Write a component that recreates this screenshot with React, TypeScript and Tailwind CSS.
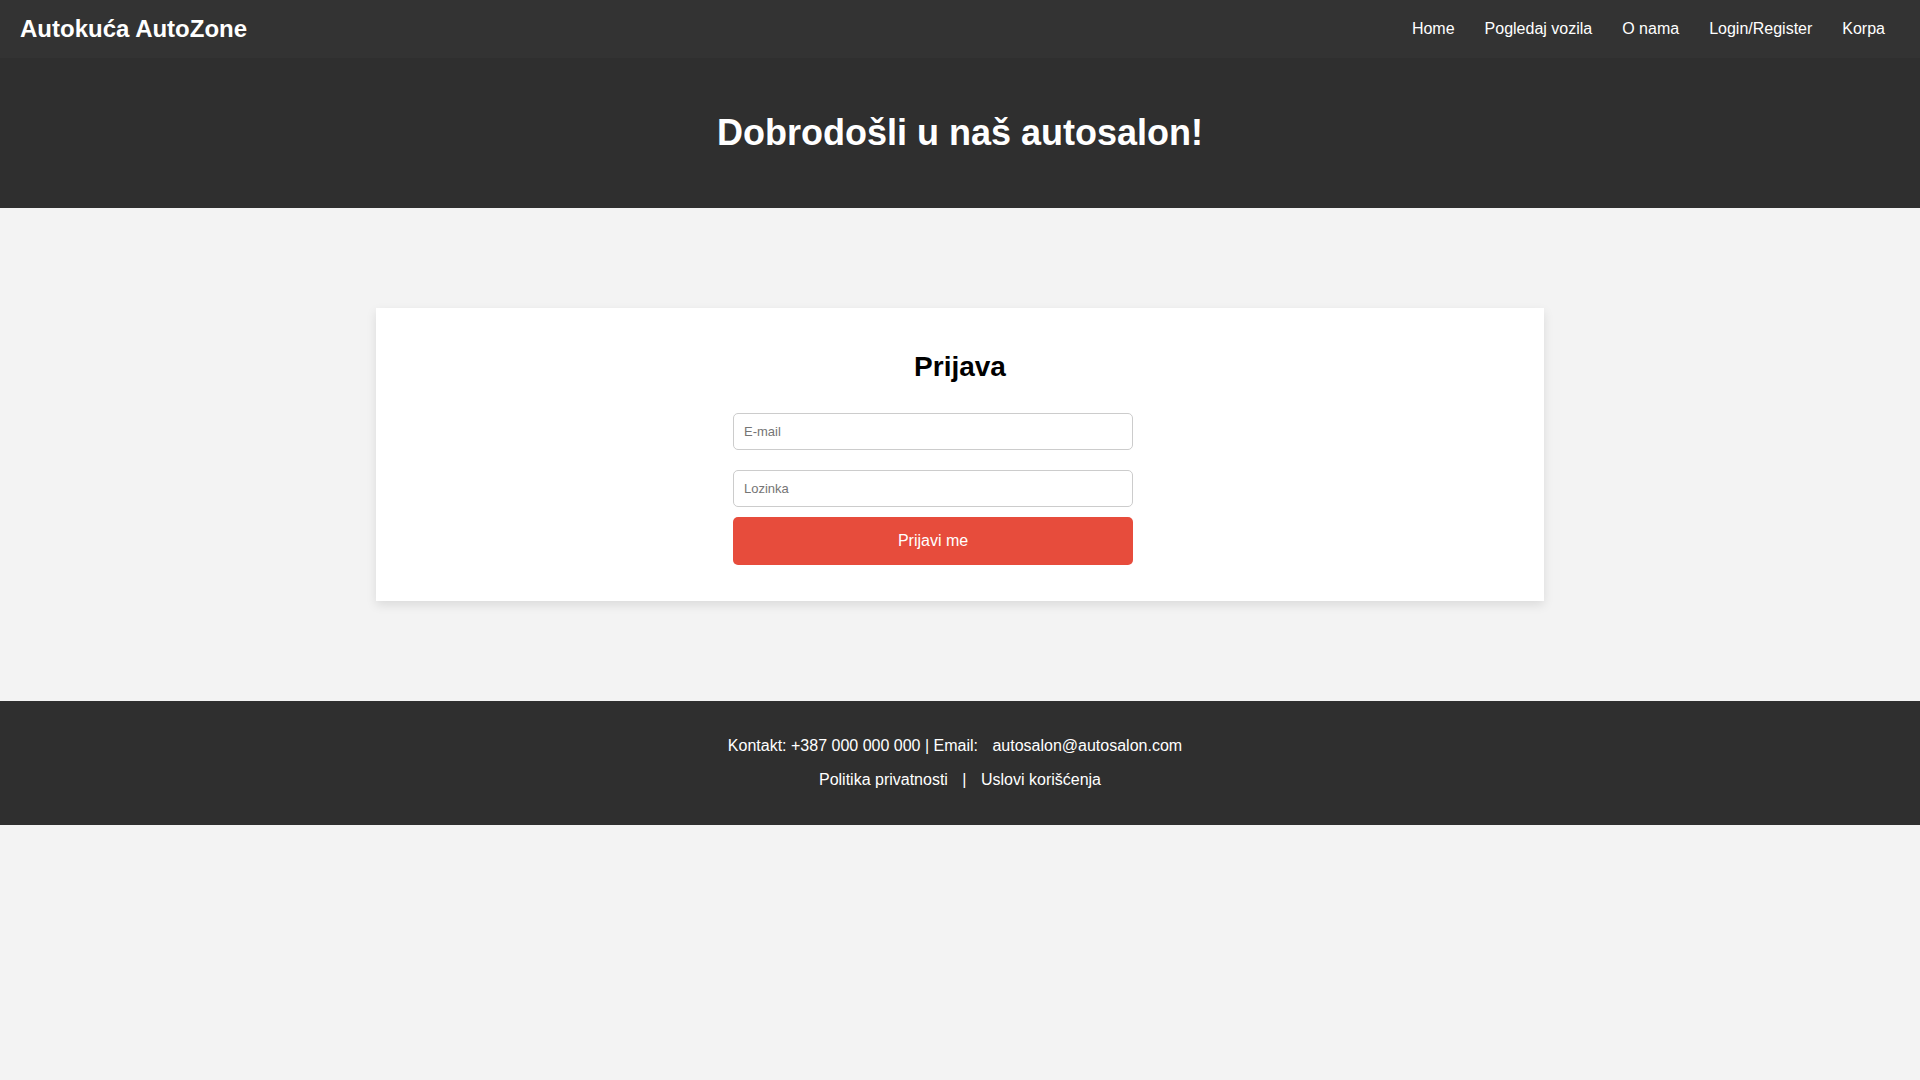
const navItems = ["Home", "Pogledaj vozila", "O nama", "Login/Register", "Korpa"];

export default function App() {
  return (
    <div className="min-h-screen bg-[#f3f3f3] font-['Liberation_Sans',Arial,sans-serif] text-base text-black">
      <nav className="flex items-center justify-between bg-[#333333] px-5 py-2.5 text-white">
        <div className="text-2xl leading-[38px] font-bold">Autokuća AutoZone</div>
        <ul className="flex">
          {navItems.map((item) => (
            <li key={item}>
              <a href="#" className="px-[15px]">{item}</a>
            </li>
          ))}
        </ul>
      </nav>

      <header className="bg-[#2f2f2f] px-5 py-[50px] text-center text-white">
        <h1 className="text-4xl leading-[50px] font-bold">Dobrodošli u naš autosalon!</h1>
      </header>

      <main className="px-5 py-[100px]">
        <section className="mx-auto max-w-[1168px] bg-white px-5 py-9 shadow-[0_4px_10px_rgba(0,0,0,0.1)]">
          <h2 className="mb-[23px] text-center text-[28px] leading-[46px] font-bold">Prijava</h2>
          <form className="mx-auto flex max-w-[454px] flex-col pr-[54px]" onSubmit={(e) => e.preventDefault()}>
            <input type="email" aria-label="E-mail" placeholder="E-mail" className="mb-5 h-[37px] w-full rounded-[5px] border border-[#cccccc] px-2.5 text-[13px] placeholder:text-[#757575]" />
            <input type="password" aria-label="Lozinka" placeholder="Lozinka" className="mb-2.5 h-[37px] w-full rounded-[5px] border border-[#cccccc] px-2.5 text-[13px] placeholder:text-[#757575]" />
            <button type="submit" className="h-12 w-full rounded-[5px] bg-[#e74c3c] text-white">Prijavi me</button>
          </form>
        </section>
      </main>

      <footer className="bg-[#2f2f2f] px-5 py-[33px] text-center text-white">
        <p className="mb-2.5">
          Kontakt: +387 000 000 000 | Email: <a href="#" className="mx-2.5">autosalon@autosalon.com</a>
        </p>
        <p>
          <a href="#" className="mx-2.5">Politika privatnosti</a> | <a href="#" className="mx-2.5">Uslovi korišćenja</a>
        </p>
      </footer>
    </div>
  );
}
